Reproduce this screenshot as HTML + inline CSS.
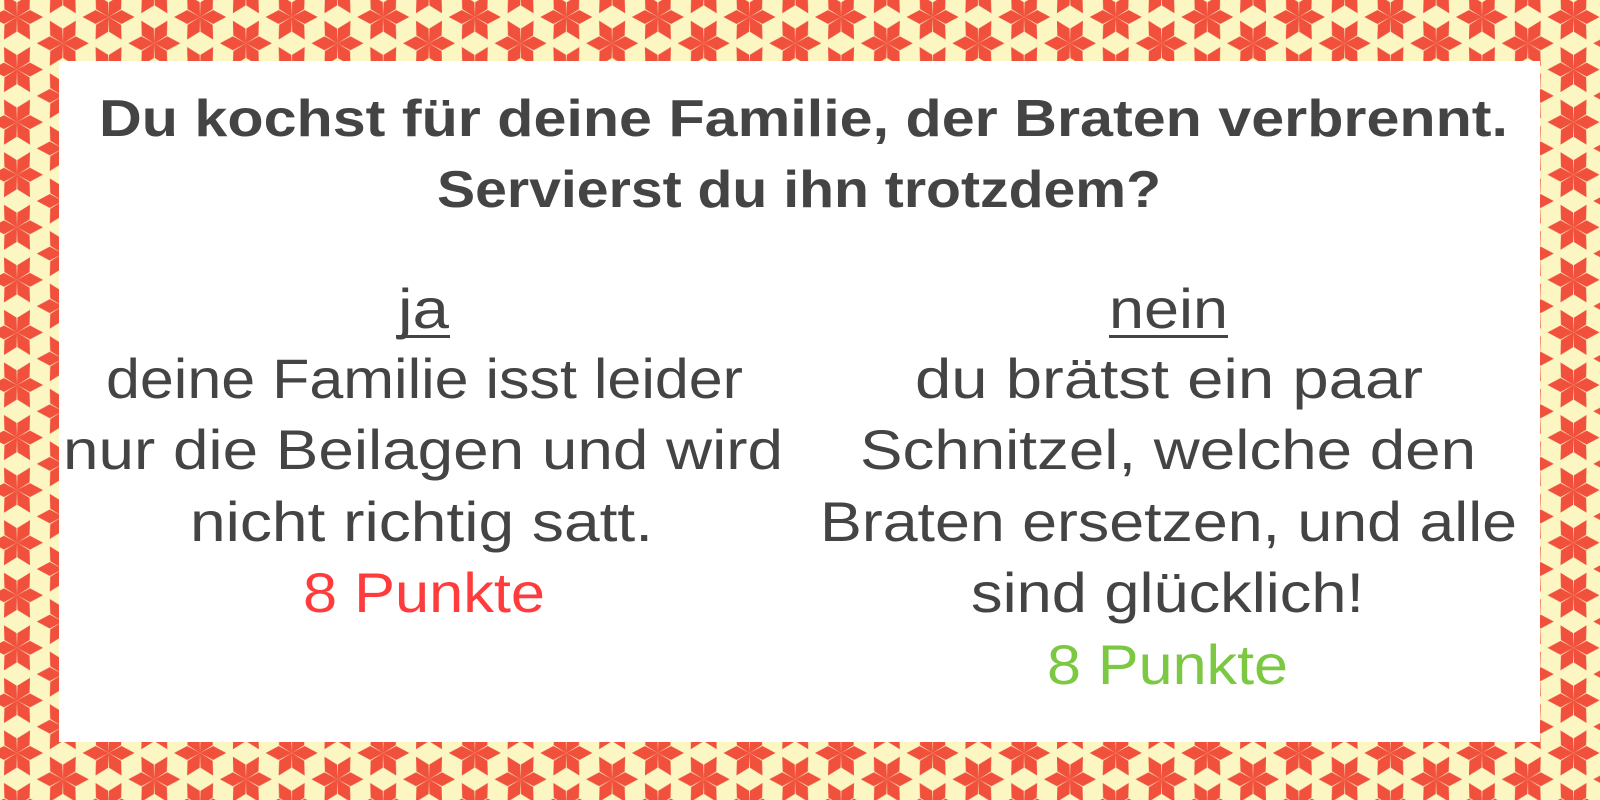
<!DOCTYPE html>
<html><head><meta charset="utf-8"><style>
html,body{margin:0;padding:0;width:1600px;height:800px;overflow:hidden}
svg{display:block}
text{font-family:"Liberation Sans",sans-serif}
</style></head><body>
<svg width="1600" height="800" viewBox="0 0 1600 800" xmlns="http://www.w3.org/2000/svg">
<defs>
<g id="st" fill="#f0503c">
<polygon points="0,0 13,-7 26,0 13,7"/>
<polygon points="0,0 13,-7 26,0 13,7" transform="rotate(60)"/>
<polygon points="0,0 13,-7 26,0 13,7" transform="rotate(120)"/>
<polygon points="0,0 13,-7 26,0 13,7" transform="rotate(180)"/>
<polygon points="0,0 13,-7 26,0 13,7" transform="rotate(240)"/>
<polygon points="0,0 13,-7 26,0 13,7" transform="rotate(300)"/>
</g>
<pattern id="p" x="17" y="17" width="91.56" height="52.57" patternUnits="userSpaceOnUse">
<rect width="91.56" height="52.57" fill="#fbf6c2"/>
<use href="#st" x="0" y="0"/><use href="#st" x="91.56" y="0"/>
<use href="#st" x="0" y="52.57"/><use href="#st" x="91.56" y="52.57"/>
<use href="#st" x="45.78" y="26.28"/>
</pattern>
</defs>
<rect width="1600" height="800" fill="url(#p)"/>
<rect x="59" y="61" width="1481" height="681" fill="#fff"/>
<g fill="#444" font-weight="bold" font-size="52" text-anchor="start">
<text x="99" y="136" textLength="1409" lengthAdjust="spacingAndGlyphs">Du kochst für deine Familie, der Braten verbrennt.</text>
<text x="437" y="207" textLength="724" lengthAdjust="spacingAndGlyphs">Servierst du ihn trotzdem?</text>
</g>
<g fill="#444" font-size="56">
<text x="398" y="328" textLength="51" lengthAdjust="spacingAndGlyphs">ja</text>
<rect x="396" y="335" width="54" height="3"/>
<text x="106" y="398" textLength="637" lengthAdjust="spacingAndGlyphs">deine Familie isst leider</text>
<text x="63" y="469" textLength="720" lengthAdjust="spacingAndGlyphs">nur die Beilagen und wird</text>
<text x="190" y="541" textLength="463" lengthAdjust="spacingAndGlyphs">nicht richtig satt.</text>
<text x="1109" y="328" textLength="119" lengthAdjust="spacingAndGlyphs">nein</text>
<rect x="1109" y="335" width="119" height="3"/>
<text x="915" y="398" textLength="508" lengthAdjust="spacingAndGlyphs">du brätst ein paar</text>
<text x="860" y="469" textLength="616" lengthAdjust="spacingAndGlyphs">Schnitzel, welche den</text>
<text x="820" y="541" textLength="697" lengthAdjust="spacingAndGlyphs">Braten ersetzen, und alle</text>
<text x="971" y="612" textLength="393" lengthAdjust="spacingAndGlyphs">sind glücklich!</text>
</g>
<text x="303" y="612" font-size="56" fill="#ff3b3b" textLength="242" lengthAdjust="spacingAndGlyphs">8 Punkte</text>
<text x="1047" y="684" font-size="56" fill="#7cc843" textLength="241" lengthAdjust="spacingAndGlyphs">8 Punkte</text>
</svg>
</body></html>
